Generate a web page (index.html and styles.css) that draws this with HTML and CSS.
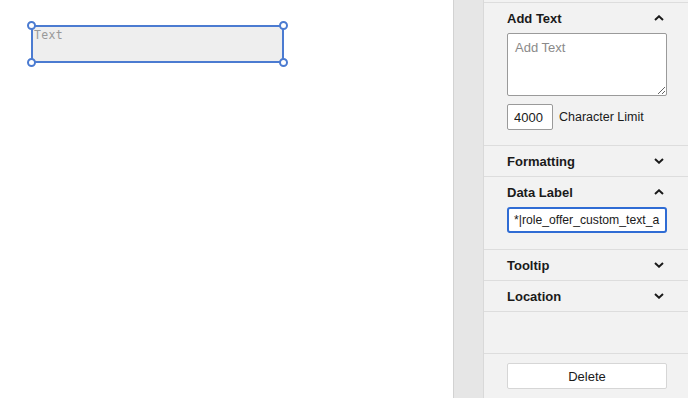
FILE: index.html
```html
<!DOCTYPE html>
<html lang="en">
<head>
  <meta charset="UTF-8" />
  <meta name="viewport" content="width=device-width, initial-scale=1.0"/>
  <title>Text Field Editor</title>
  <link rel="stylesheet" href="styles.css">
</head>
<body>
  <div class="layout">
    <!-- Canvas with the selected text field -->
    <main class="canvas">
      <div class="field">
        <span class="field-text">Text</span>
        <span class="handle tl"></span>
        <span class="handle tr"></span>
        <span class="handle bl"></span>
        <span class="handle br"></span>
      </div>
    </main>

    <div class="gutter"></div>

    <!-- Properties panel -->
    <aside class="panel">
      <div class="panel-top"></div>

      <section class="group open">
        <div class="group-head">
          <span>Add Text</span>
          <svg class="chev" viewBox="0 0 10 6"><path d="M1 5 L5 1.3 L9 5"/></svg>
        </div>
        <div class="group-body first">
          <textarea class="text-area" placeholder="Add Text"></textarea>
          <div class="limit-row">
            <input class="limit-input" type="text" value="4000">
            <span>Character Limit</span>
          </div>
        </div>
      </section>

      <section class="group">
        <div class="group-head">
          <span>Formatting</span>
          <svg class="chev" viewBox="0 0 10 6"><path d="M1 1 L5 4.7 L9 1"/></svg>
        </div>
      </section>

      <section class="group open">
        <div class="group-head">
          <span>Data Label</span>
          <svg class="chev" viewBox="0 0 10 6"><path d="M1 5 L5 1.3 L9 5"/></svg>
        </div>
        <div class="group-body">
          <div class="label-input">*|role_offer_custom_text_a</div>
        </div>
      </section>

      <section class="group">
        <div class="group-head">
          <span>Tooltip</span>
          <svg class="chev" viewBox="0 0 10 6"><path d="M1 1 L5 4.7 L9 1"/></svg>
        </div>
      </section>

      <section class="group">
        <div class="group-head">
          <span>Location</span>
          <svg class="chev" viewBox="0 0 10 6"><path d="M1 1 L5 4.7 L9 1"/></svg>
        </div>
      </section>

      <div class="spacer"></div>

      <div class="actions">
        <button class="delete-btn">Delete</button>
      </div>
    </aside>
  </div>
</body>
</html>
```

FILE: styles.css
```css
/* Basic resets and layout */
* {
  margin: 0;
  padding: 0;
  box-sizing: border-box;
}
body {
  font-family: "Liberation Sans", Arial, sans-serif;
  color: #1a1a1a;
  background: #ffffff;
}

.layout {
  display: flex;
  height: 398px;
  overflow: hidden;
}

/* Canvas */
.canvas {
  width: 453px;
  background: #ffffff;
  padding: 25px 0 0 31px;
}
.field {
  position: relative;
  width: 253px;
  height: 38px;
  background: #eeeeee;
  border: 2px solid #4b7bd1;
  padding: 0 0 0 1px;
  line-height: 14px;
}
.field-text {
  font-family: "DejaVu Sans Mono", "Liberation Mono", monospace;
  font-size: 11.5px;
  letter-spacing: 0.3px;
  color: #999999;
}
.handle {
  position: absolute;
  width: 9px;
  height: 9px;
  border: 2px solid #4b7bd1;
  border-radius: 50%;
  background: #ffffff;
}
.handle.tl { left: -6px; top: -6px; }
.handle.tr { right: -6px; top: -6px; }
.handle.bl { left: -6px; bottom: -6px; }
.handle.br { right: -6px; bottom: -6px; }

/* Gray strip between canvas and panel */
.gutter {
  width: 31px;
  background: #e6e6e6;
  border-left: 1px solid #d2d2d2;
  border-right: 1px solid #d9d9d9;
}

/* Properties panel */
.panel {
  width: 204px;
  background: #f2f2f2;
  display: flex;
  flex-direction: column;
}
.panel-top {
  height: 3px;
  border-bottom: 1px solid #dddddd;
}
.group {
  border-bottom: 1px solid #dddddd;
}
.group-head {
  height: 30px;
  display: flex;
  align-items: center;
  justify-content: space-between;
  padding: 0 24px 0 23px;
  font-size: 13px;
  font-weight: bold;
}
.chev {
  width: 10px;
  height: 6px;
  fill: none;
  stroke: #1a1a1a;
  stroke-width: 2;
}
.group-body {
  padding: 0 21px 16px 23px;
}
.group-body.first {
  padding-bottom: 15px;
}

.text-area {
  display: block;
  width: 160px;
  height: 63px;
  resize: vertical;
  border: 1px solid #9a9a9a;
  border-radius: 2px;
  background: #ffffff;
  padding: 6px 7px;
  font-family: "Liberation Sans", Arial, sans-serif;
  font-size: 13px;
}
.text-area::placeholder {
  color: #8a8a8a;
}
.limit-row {
  display: flex;
  align-items: center;
  gap: 6px;
  margin-top: 8px;
  font-size: 12.5px;
}
.limit-input {
  width: 46px;
  height: 26px;
  border: 1px solid #9a9a9a;
  border-radius: 2px;
  padding: 0 6px;
  font-family: "Liberation Sans", Arial, sans-serif;
  font-size: 13px;
  color: #1a1a1a;
  background: #ffffff;
}

.label-input {
  width: 160px;
  height: 26px;
  border: 2px solid #2f6cd4;
  border-radius: 3px;
  background: #ffffff;
  padding: 0 5px;
  font-size: 12.2px;
  line-height: 22px;
  white-space: nowrap;
  overflow: hidden;
}

.spacer {
  height: 42px;
  border-bottom: 1px solid #dddddd;
}
.actions {
  padding: 9px 21px 0 23px;
}
.delete-btn {
  width: 160px;
  height: 26px;
  border: 1px solid #d6d6d6;
  border-radius: 2px;
  background: #ffffff;
  font-family: "Liberation Sans", Arial, sans-serif;
  font-size: 13px;
  color: #1a1a1a;
  cursor: pointer;
}
```
